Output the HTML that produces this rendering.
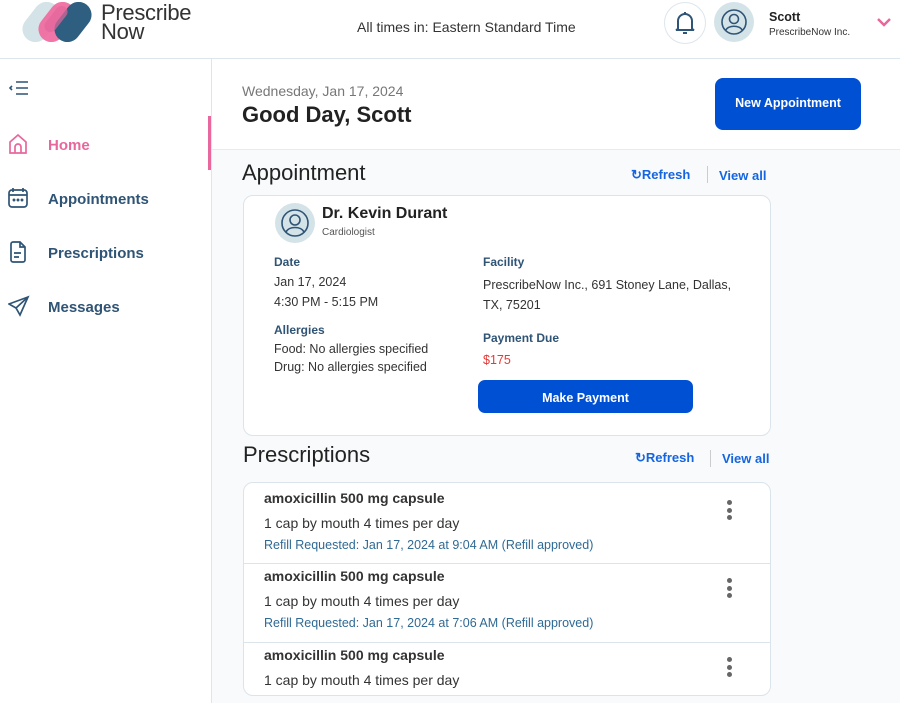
<!DOCTYPE html>
<html><head><style>
*{margin:0;padding:0;box-sizing:border-box}
body{width:900px;height:703px;overflow:hidden;background:#fff;font-family:"Liberation Sans",sans-serif;position:relative;color:#222}
.a{position:absolute}
.nav{position:absolute;left:48px;font-size:15px;font-weight:bold;color:#2f5475}
.lbl{position:absolute;font-size:12px;font-weight:bold;color:#2f5475}
.txt{position:absolute;font-size:12.5px;color:#333}
.link{position:absolute;font-size:13px;font-weight:bold;color:#1565e0}
.card{position:absolute;background:#fff;border:1px solid #dbe4ea;border-radius:10px}
.rx{position:absolute;left:20px}
.rxt{font-size:14px;font-weight:bold;color:#333}
.rxs{font-size:14px;color:#333;margin-top:9px}
.rxr{font-size:12.5px;color:#2f6a94;margin-top:7px}
.dots{position:absolute;right:38px;width:5px}
.dots i{display:block;width:5px;height:5px;border-radius:50%;background:#666;margin-bottom:2.5px}
</style></head><body>
<svg class="a" style="left:22px;top:2px" width="72" height="40">
<rect x="6" y="-2" width="26" height="44" rx="13" transform="rotate(38 19 20)" fill="#d4e3e8"/>
<rect x="22" y="-2" width="26" height="44" rx="13" transform="rotate(38 35 20)" fill="#f06a9f" opacity=".92"/>
<rect x="38" y="-2" width="26" height="44" rx="13" transform="rotate(38 51 20)" fill="#2e5f80"/>
<rect x="28" y="2" width="12" height="30" rx="6" transform="rotate(38 34 17)" fill="#e2679a" opacity=".7"/>
</svg>
<div class="a" style="left:101px;top:3px;font-size:22px;line-height:19px;color:#333;letter-spacing:-.3px;font-weight:bold;-webkit-text-stroke:0;font-weight:500">Prescribe<br>Now</div>
<div class="a" style="left:357px;top:19px;font-size:14px;color:#333">All times in: Eastern Standard Time</div>
<div class="a" style="left:664px;top:2px;width:42px;height:42px;border:1px solid #dde6ec;border-radius:50%"></div>
<svg class="a" style="left:674px;top:11px" width="22" height="24" fill="none" stroke="#2f5475" stroke-width="2"><path d="M4 18V10a7 7 0 0 1 14 0v8l2 1H2z"/><path d="M9 22h4"/><path d="M11 1v2"/></svg>
<div class="a" style="left:714px;top:2px;width:40px;height:40px;border-radius:50%;background:#d4e3e8"></div>
<svg class="a" style="left:720px;top:8px" width="28" height="28" fill="none" stroke="#2f5475" stroke-width="1.6"><circle cx="14" cy="14" r="12"/><circle cx="14" cy="11" r="4.5"/><path d="M6 22c2-5 14-5 16 0"/></svg>
<div class="a" style="left:769px;top:10px;font-size:12.5px;font-weight:bold;color:#222">Scott</div>
<div class="a" style="left:769px;top:27px;font-size:10px;color:#333">PrescribeNow Inc.</div>
<svg class="a" style="left:876px;top:17px" width="16" height="10" fill="none" stroke="#e8679c" stroke-width="2.5"><path d="M2 2l6 6 6-6"/></svg>
<div class="a" style="left:0;top:58px;width:900px;height:1px;background:#dce6ef"></div>
<div class="a" style="left:211px;top:59px;width:1px;height:644px;background:#dce6ef"></div>
<div class="a" style="left:208px;top:116px;width:3px;height:54px;background:#e8679c"></div>
<svg class="a" style="left:8px;top:80px" width="22" height="16" fill="none" stroke="#2f5475" stroke-width="1.6"><path d="M8 2h12M8 8h12M8 14h12M4 6l-2 2 2 2"/></svg>
<svg class="a" style="left:8px;top:133px" width="20" height="22" fill="none" stroke="#e8679c" stroke-width="1.7"><path d="M2 9l8-7 8 7v11H2z"/><path d="M7 20v-6a3 3 0 0 1 6 0v6"/></svg>
<div class="nav" style="top:137px;color:#e8679c">Home</div>
<svg class="a" style="left:8px;top:187px" width="20" height="22" fill="none" stroke="#2f5475" stroke-width="1.7"><rect x="1" y="3" width="18" height="17" rx="3"/><path d="M5 1v4M15 1v4M1 8h18"/><circle cx="6" cy="13" r=".6" fill="#2f5475"/><circle cx="10" cy="13" r=".6" fill="#2f5475"/><circle cx="14" cy="13" r=".6" fill="#2f5475"/></svg>
<div class="nav" style="top:191px">Appointments</div>
<svg class="a" style="left:9px;top:241px" width="18" height="22" fill="none" stroke="#2f5475" stroke-width="1.7"><path d="M2 3a2 2 0 0 1 2-2h7l5 5v13a2 2 0 0 1-2 2H4a2 2 0 0 1-2-2z"/><path d="M11 1v5h5M5 12h7M5 16h5"/></svg>
<div class="nav" style="top:245px">Prescriptions</div>
<svg class="a" style="left:8px;top:295px" width="22" height="22" fill="none" stroke="#2f5475" stroke-width="1.7"><path d="M20 2L1 9l7 4 4 7z"/><path d="M8 13L20 2"/></svg>
<div class="nav" style="top:299px">Messages</div>
<div class="a" style="left:212px;top:150px;width:688px;height:553px;background:#f8fafb"></div>
<div class="a" style="left:212px;top:149px;width:688px;height:1px;background:#e5ecf0"></div>
<div class="a" style="left:242px;top:83px;font-size:14px;color:#777">Wednesday, Jan 17, 2024</div>
<div class="a" style="left:242px;top:102px;font-size:22px;font-weight:bold;color:#222">Good Day, Scott</div>
<div class="a" style="left:715px;top:78px;width:146px;height:52px;background:#0050d4;border-radius:8px;color:#fff;font-size:12.5px;font-weight:bold;text-align:center;line-height:50px">New Appointment</div>
<div class="a" style="left:242px;top:160px;font-size:22px;color:#222">Appointment</div>
<div class="link" style="left:631px;top:167px">↻Refresh</div>
<div class="a" style="left:707px;top:166px;width:1px;height:17px;background:#ccc"></div>
<div class="link" style="left:719px;top:168px">View all</div>
<div class="card" style="left:243px;top:195px;width:528px;height:241px">
<div class="a" style="left:31px;top:7px;width:40px;height:40px;border-radius:50%;background:#d4e3e8"></div>
<svg class="a" style="left:35px;top:11px" width="32" height="32" fill="none" stroke="#2f5475" stroke-width="1.6"><circle cx="16" cy="16" r="13"/><circle cx="16" cy="13" r="5"/><path d="M7 25c3-6 15-6 18 0"/></svg>
<div class="a" style="left:78px;top:9px;font-size:16px;font-weight:bold;color:#222">Dr. Kevin Durant</div>
<div class="a" style="left:78px;top:31px;font-size:10px;color:#555">Cardiologist</div>
<div class="lbl" style="left:30px;top:59px">Date</div>
<div class="txt" style="left:30px;top:79px">Jan 17, 2024</div>
<div class="txt" style="left:30px;top:99px">4:30 PM - 5:15 PM</div>
<div class="lbl" style="left:30px;top:127px">Allergies</div>
<div class="txt" style="left:30px;top:146px">Food: No allergies specified</div>
<div class="txt" style="left:30px;top:164px">Drug: No allergies specified</div>
<div class="lbl" style="left:239px;top:59px">Facility</div>
<div class="txt" style="left:239px;top:79px;width:270px;line-height:20px">PrescribeNow Inc., 691 Stoney Lane, Dallas, TX, 75201</div>
<div class="lbl" style="left:239px;top:135px">Payment Due</div>
<div class="txt" style="left:239px;top:157px;color:#e53935">$175</div>
<div class="a" style="left:234px;top:184px;width:215px;height:33px;background:#0050d4;border-radius:7px;color:#fff;font-size:12.5px;font-weight:bold;text-align:center;line-height:37px">Make Payment</div>
</div>
<div class="a" style="left:243px;top:442px;font-size:22px;color:#222">Prescriptions</div>
<div class="link" style="left:635px;top:450px">↻Refresh</div>
<div class="a" style="left:710px;top:450px;width:1px;height:17px;background:#ccc"></div>
<div class="link" style="left:722px;top:451px">View all</div>
<div class="card" style="left:243px;top:482px;width:528px;height:214px;overflow:hidden">
<div class="a" style="left:0;top:80px;width:528px;height:1px;background:#dbe4ea"></div>
<div class="a" style="left:0;top:159px;width:528px;height:1px;background:#dbe4ea"></div>
<div class="rx" style="top:7px"><div class="rxt">amoxicillin 500 mg capsule</div><div class="rxs">1 cap by mouth 4 times per day</div><div class="rxr">Refill Requested: Jan 17, 2024 at 9:04 AM (Refill approved)</div></div>
<div class="dots" style="top:17px"><i></i><i></i><i></i></div>
<div class="rx" style="top:85px"><div class="rxt">amoxicillin 500 mg capsule</div><div class="rxs">1 cap by mouth 4 times per day</div><div class="rxr">Refill Requested: Jan 17, 2024 at 7:06 AM (Refill approved)</div></div>
<div class="dots" style="top:95px"><i></i><i></i><i></i></div>
<div class="rx" style="top:164px"><div class="rxt">amoxicillin 500 mg capsule</div><div class="rxs">1 cap by mouth 4 times per day</div></div>
<div class="dots" style="top:174px"><i></i><i></i><i></i></div>
</div>
</body></html>
